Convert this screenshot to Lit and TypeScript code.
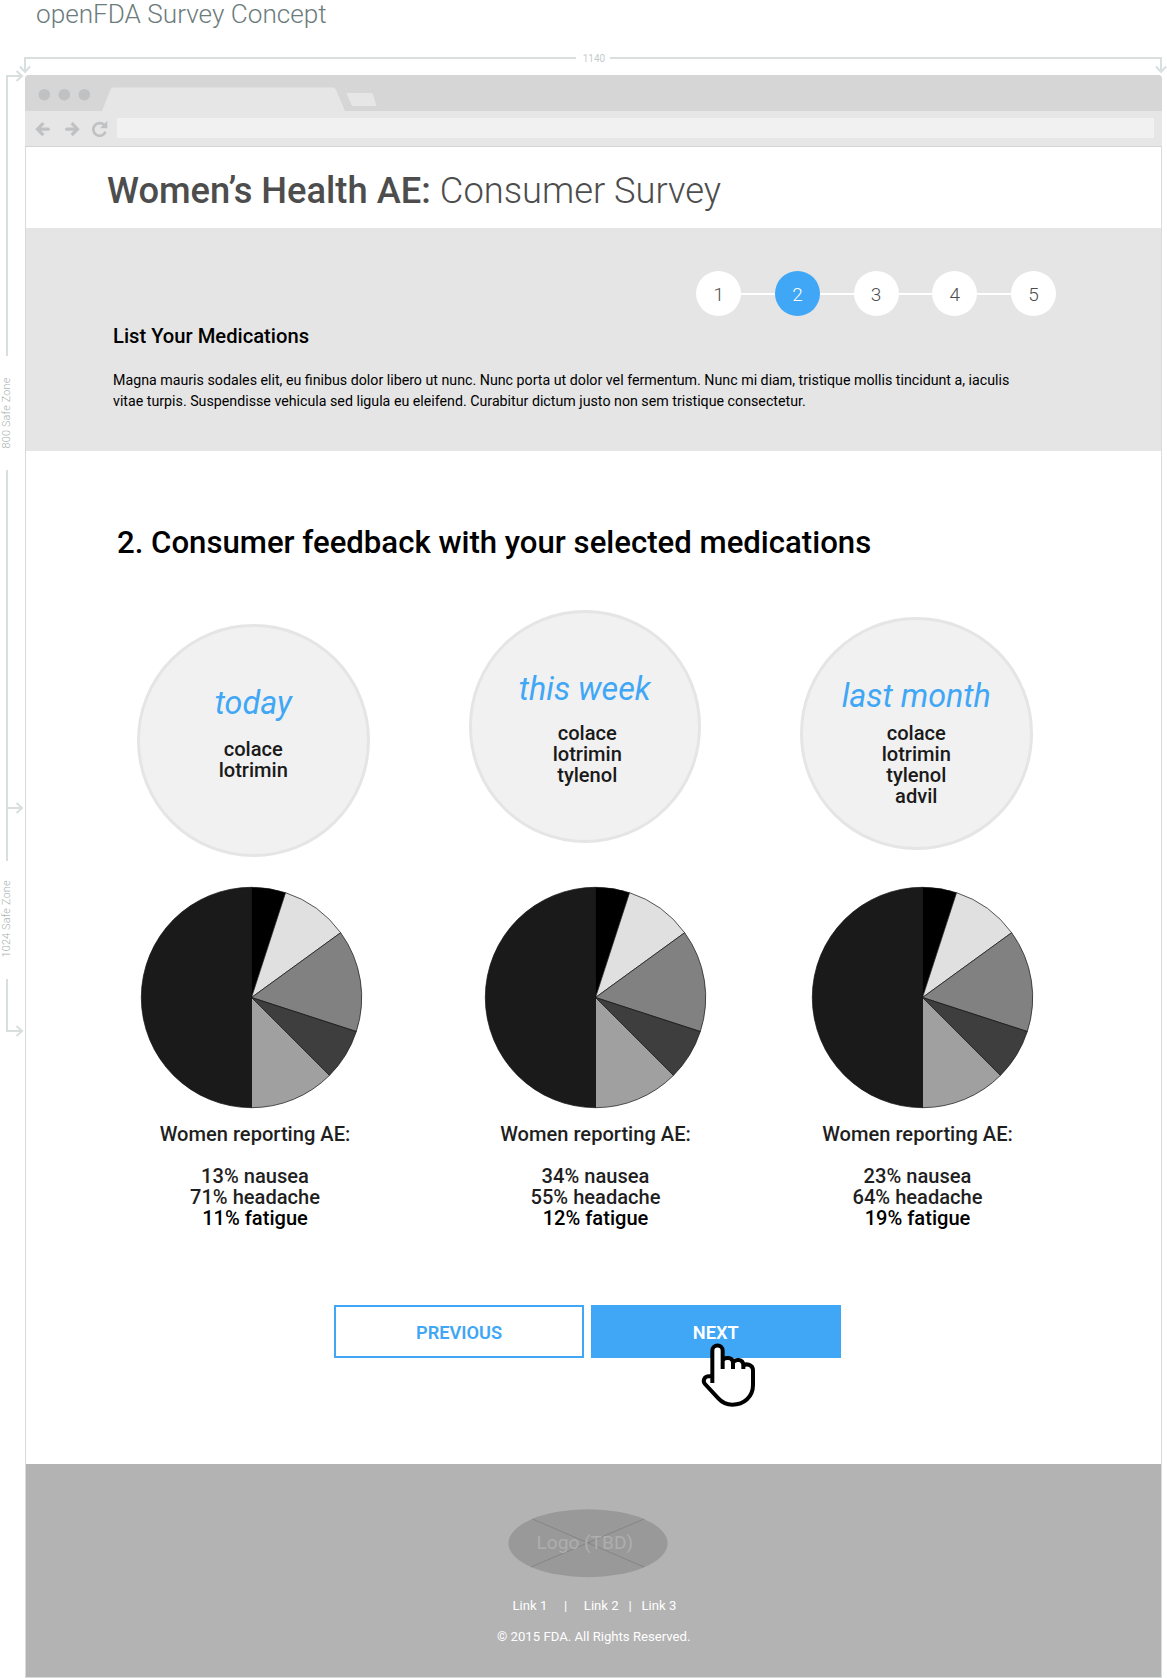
import { LitElement, html, svg, css } from "lit";
import { customElement, property } from "lit/decorators.js";
import { classMap } from "lit/directives/class-map.js";

interface Period {
  title: string;
  kind: string;
  drugs: string[];
  effects: string[];
}

const PERIODS: Period[] = [
  {
    title: "today",
    kind: "today",
    drugs: ["colace", "lotrimin"],
    effects: ["13% nausea", "71% headache", "11% fatigue"],
  },
  {
    title: "this week",
    kind: "week",
    drugs: ["colace", "lotrimin", "tylenol"],
    effects: ["34% nausea", "55% headache", "12% fatigue"],
  },
  {
    title: "last month",
    kind: "month",
    drugs: ["colace", "lotrimin", "tylenol", "advil"],
    effects: ["23% nausea", "64% headache", "19% fatigue"],
  },
];

const SLICES = [
  { share: 5, color: "#000000" },
  { share: 10, color: "#e0e0e0" },
  { share: 15, color: "#818181" },
  { share: 7.5, color: "#3e3e3e" },
  { share: 12.5, color: "#a0a0a0" },
  { share: 50, color: "#1a1a1a" },
];

@customElement("pie-chart")
class PieChart extends LitElement {
  static styles = css`
    :host {
      display: block;
      width: 221px;
      height: 221px;
    }
    .pie {
      display: block;
      width: 221px;
      height: 221px;
      overflow: visible;
    }
    .slice {
      stroke: #111;
      stroke-width: 0.7;
      stroke-linejoin: round;
    }
  `;

  render() {
    const r = 110.2;
    let start = 0;
    const point = (pct: number) => {
      const a = (pct / 100) * Math.PI * 2;
      return `${(r * Math.sin(a)).toFixed(2)} ${(-r * Math.cos(a)).toFixed(2)}`;
    };
    return html`<svg class="pie" viewBox="-110.5 -110.5 221 221">
      ${SLICES.map(({ share, color }) => {
        const from = point(start);
        start += share;
        return svg`<path class="slice" fill=${color} d="M0 0L${from}A${r} ${r} 0 0 1 ${point(start)}Z"></path>`;
      })}
    </svg>`;
  }
}

@customElement("step-tracker")
class StepTracker extends LitElement {
  @property({ type: Number }) current = 1;
  @property({ type: Number }) total = 5;

  static styles = css`
    :host {
      display: flex;
      align-items: center;
    }
    .step {
      width: 45px;
      height: 45px;
      border-radius: 50%;
      background: #fff;
      color: #4d4d4d;
      font-size: 19px;
      font-weight: 300;
      line-height: 48px;
      text-align: center;
    }
    .step.active {
      background: #3fa7f5;
      color: #fff;
    }
    .link {
      width: 33.7px;
      height: 2px;
      background: #fff;
    }
  `;

  render() {
    return Array.from({ length: this.total }, (_, i) => i + 1).map(
      (n) => html`
        ${n > 1 ? html`<div class="link"></div>` : ""}
        <div class=${classMap({ step: true, active: n === this.current })}>${n}</div>
      `,
    );
  }
}

@customElement("browser-chrome")
class BrowserChrome extends LitElement {
  static styles = css`
    :host {
      display: block;
    }
    .strip {
      display: block;
      width: 1137px;
      height: 36px;
    }
    .toolbar {
      display: flex;
      align-items: center;
      box-sizing: border-box;
      height: 36px;
      padding: 0 8px 0 9.500px;
      background: #e6e6e6;
      border-bottom: 1px solid #d4d4d4;
    }
    .nav {
      display: block;
      flex: none;
      width: 82.5px;
      height: 18px;
    }
    .url {
      flex: 1;
      height: 20px;
      margin-bottom: 1px;
      background: #f1f1f1;
      border-radius: 1px;
    }
  `;

  render() {
    return html`
      <svg class="strip" viewBox="25 75 1137 36">
        <path fill="#d6d6d6" d="M25 111V78.500Q25 75 28.500 75H1158.500Q1162 75 1162 78.500V111Z"></path>
        <g fill="#bfc1c2">
          <circle cx="44.300" cy="94.700" r="5.800"></circle>
          <circle cx="64.300" cy="94.700" r="5.800"></circle>
          <circle cx="84.300" cy="94.700" r="5.800"></circle>
        </g>
        <path fill="#e6e6e6" d="M102 111L110.500 89.500Q111.200 87.500 113.500 87.500H332.500Q334.800 87.500 335.800 89.500L345 111Z"></path>
        <path fill="#e6e6e6" d="M346.300 93H371Q372.500 93 373 94.300L376.500 106H353.500Q352 106 351.500 104.800Z"></path>
      </svg>
      <div class="toolbar">
        <svg class="nav" viewBox="105 210.500 247.500 54" fill="none" stroke="#bfc1c2" stroke-width="9.500">
          <path stroke-linecap="round" d="M145 238H116"></path>
          <path d="M130 220L112.500 238L130 256"></path>
          <path stroke-linecap="round" d="M200 238H229"></path>
          <path d="M215 220L232.500 238L215 256"></path>
          <path stroke-width="8" d="M316.500 246A19 19 0 1 1 312 225"></path>
          <path stroke="none" fill="#bfc1c2" d="M322 213V235H300Z"></path>
        </svg>
        <div class="url"></div>
      </div>
    `;
  }
}

@customElement("app-root")
class AppRoot extends LitElement {
  static styles = css`
    :host {
      display: block;
      width: 1167px;
      height: 1678px;
      background: #fff;
      font-family: Roboto, "Liberation Sans", sans-serif;
      color: #000;
    }
    .concept {
      height: 52px;
      padding-left: 36px;
      color: #6c7c7c;
      font-size: 26.15px;
      font-weight: 300;
      line-height: 29px;
      box-sizing: border-box;
    }
    .ruler {
      display: block;
      width: 1167px;
      height: 23px;
    }
    .guide {
      fill: none;
      stroke: #d9dede;
      stroke-width: 2;
    }
    .note {
      fill: #c6cccc;
      font-size: 10px;
    }
    .note.side {
      font-size: 10.8px;
      font-weight: 300;
      fill: #aab2b2;
      letter-spacing: 0.2px;
    }
    .stage {
      display: flex;
    }
    .rail {
      display: block;
      flex: none;
      width: 25px;
      height: 1603px;
      overflow: visible;
    }
    .window {
      width: 1137px;
    }
    .page {
      box-sizing: border-box;
      height: 1531px;
      border: 1px solid #d9dbdb;
      border-top: 0;
    }
    .masthead {
      height: 81px;
      box-sizing: border-box;
      padding: 22px 0 0 81px;
      color: #4d4d4d;
    }
    .name {
      margin: 0;
      font-size: 36.3px;
      font-weight: 500;
      line-height: 44px;
      white-space: nowrap;
    }
    .name .light {
      font-weight: 300;
    }
    .intro {
      box-sizing: border-box;
      height: 223px;
      padding: 43px 105px 0 87px;
      background: #e5e5e5;
    }
    .steps {
      display: flex;
      justify-content: flex-end;
    }
    .subtitle {
      margin: 8px 0 0;
      font-size: 20.2px;
      font-weight: 500;
      line-height: 24px;
    }
    .lead {
      margin: 22px 0 0;
      font-size: 14.23px;
      line-height: 21px;
      white-space: nowrap;
    }
    .main {
      box-sizing: border-box;
      height: 1013px;
      padding-top: 74px;
    }
    .question {
      margin: 0 0 49px 91px;
      font-size: 31.15px;
      font-weight: 500;
      line-height: 36px;
      white-space: nowrap;
    }
    .bubbles {
      display: flex;
      align-items: flex-start;
      gap: 99px;
      height: 247px;
      padding-left: 111px;
    }
    .bubble {
      box-sizing: border-box;
      width: 232.5px;
      height: 232.5px;
      padding-top: 57px;
      border: 3px solid #e5e5e5;
      border-radius: 50%;
      background: #f1f1f1;
      text-align: center;
    }
    .bubble.today {
      margin-top: 14px;
    }
    .bubble.month {
      margin-top: 7px;
    }
    .when {
      color: #3fa7f5;
      font-size: 32.3px;
      font-style: italic;
      line-height: 38px;
    }
    .drugs {
      color: #1a1a1a;
      font-size: 20.1px;
      font-weight: 500;
      line-height: 21px;
    }
    .today .drugs {
      margin-top: 17px;
    }
    .week .drugs {
      margin-top: 15px;
      padding-left: 5px;
    }
    .month .drugs {
      margin-top: 8px;
    }
    .pies {
      display: flex;
      gap: 106.500px;
      padding: 30px 0 0 114.500px;
    }
    .pies .first {
      margin-right: 16.500px;
    }
    .reports {
      display: flex;
      padding: 16px 0 0 128px;
    }
    .report {
      width: 202px;
      color: #1f1f1f;
      font-size: 20.1px;
      font-weight: 500;
      line-height: 21px;
      text-align: center;
    }
    .report + .report {
      margin-left: 138.500px;
    }
    .report + .report + .report {
      margin-left: 120px;
    }
    .effects {
      margin-top: 21px;
    }
    .effects .last {
      color: #000;
    }
    .actions {
      display: flex;
      gap: 6.500px;
      padding: 76px 0 0 308px;
    }
    .button {
      position: relative;
      box-sizing: border-box;
      width: 250.2px;
      height: 52.5px;
      border: 2px solid #3fa7f5;
      color: #3fa7f5;
      font-size: 18.2px;
      font-weight: 600;
      line-height: 51px;
      text-align: center;
    }
    .button.primary {
      background: #3fa7f5;
      color: #fff;
    }
    .pointer {
      position: absolute;
      left: 96.500px;
      top: 23px;
      width: 80px;
      height: 84px;
    }
    .footer {
      box-sizing: border-box;
      display: flex;
      flex-direction: column;
      height: 213px;
      padding-top: 45px;
      background: #b3b3b3;
      color: #fff;
      font-size: 13.15px;
      line-height: 16px;
    }
    .logo {
      display: block;
      width: 160px;
      height: 69px;
      margin-left: 482px;
    }
    .logo-text {
      fill: #aeaeae;
      font-size: 19.1px;
    }
    .links {
      display: flex;
      margin: 20px 0 0 486.500px;
      white-space: nowrap;
    }
    .bar {
      width: 36.500px;
      text-align: center;
    }
    .bar.tight {
      width: 22.800px;
    }
    .copyright {
      margin: 15px 0 0 471px;
    }
  `;

  private arrow(x: number, y: number, down = false) {
    return down
      ? svg`<path class="guide" d="M${x - 5} ${y - 5.5}L${x} ${y}L${x + 5} ${y - 5.5}"></path>`
      : svg`<path class="guide" d="M${x - 5.5} ${y - 5}L${x} ${y}L${x - 5.5} ${y + 5}"></path>`;
  }

  render() {
    return html`
      <div class="concept">openFDA Survey Concept</div>
      <svg class="ruler" viewBox="0 52 1167 23">
        <path class="guide" d="M25 72V58H576M610 58H1161V72"></path>
        ${this.arrow(25, 72, true)} ${this.arrow(1161, 72, true)}
        <text class="note" x="594" y="61.500" text-anchor="middle">1140</text>
      </svg>
      <div class="stage">
        <svg class="rail" viewBox="0 75 25 1603">
          <path
            class="guide"
            d="M22 76H7V356M7 470V861M7 808H22M7 979V1031H22"
          ></path>
          ${this.arrow(22, 76)} ${this.arrow(22, 808)} ${this.arrow(22, 1031)}
          <text class="note side" transform="translate(10 448.500) rotate(-90)">800 Safe Zone</text>
          <text class="note side" transform="translate(10 957.500) rotate(-90)">1024 Safe Zone</text>
        </svg>
        <div class="window">
          <browser-chrome></browser-chrome>
          <div class="page">
            <header class="masthead">
              <h1 class="name">Women’s Health AE: <span class="light">Consumer Survey</span></h1>
            </header>
            <section class="intro">
              <div class="steps"><step-tracker current="2" total="5"></step-tracker></div>
              <h2 class="subtitle">List Your Medications</h2>
              <p class="lead">
                Magna mauris sodales elit, eu finibus dolor libero ut nunc. Nunc porta ut dolor vel
                fermentum. Nunc mi diam, tristique mollis tincidunt a, iaculis<br />vitae turpis.
                Suspendisse vehicula sed ligula eu eleifend. Curabitur dictum justo non sem
                tristique consectetur.
              </p>
            </section>
            <main class="main">
              <h2 class="question">2. Consumer feedback with your selected medications</h2>
              <div class="bubbles">
                ${PERIODS.map(
                  (p) => html`<div class="bubble ${p.kind}">
                    <div class="when">${p.title}</div>
                    <div class="drugs">${p.drugs.map((d) => html`<div>${d}</div>`)}</div>
                  </div>`,
                )}
              </div>
              <div class="pies">
                ${PERIODS.map(
                  (_, i) => html`<pie-chart class=${i === 0 ? "first" : ""}></pie-chart>`,
                )}
              </div>
              <div class="reports">
                ${PERIODS.map(
                  (p) => html`<div class="report">
                    <div>Women reporting AE:</div>
                    <div class="effects">
                      ${p.effects.map(
                        (e, i) => html`<div class=${classMap({ last: i === 2 })}>${e}</div>`,
                      )}
                    </div>
                  </div>`,
                )}
              </div>
              <div class="actions">
                <div class="button">PREVIOUS</div>
                <div class="button primary">
                  NEXT
                  <svg class="pointer" viewBox="0 0 240 252">
                    <path
                      fill="#fff"
                      d="M70 62a15.500 15.500 0 0 1 31 0V92Q118 78 132 92Q150 82 163 100Q192 98 192 120V165C192 200 165 224 130 224C112 224 98 216 88 205L48 162C40 152 46 139 60 139H70Z"
                    ></path>
                    <path
                      fill="none"
                      stroke="#000"
                      stroke-width="12"
                      d="M70 159V62a15.500 15.500 0 0 1 31 0V117M101 92C106 81 132 80 132 99V117M132 99C136 86 163 86 163 106V117M163 109C168 99 192 102 192 122V165C192 200 165 224 130 224C112 224 98 216 88 205L48 162C40 152 46 139 60 139H70"
                    ></path>
                  </svg>
                </div>
              </div>
            </main>
            <footer class="footer">
              <svg class="logo" viewBox="508 1509 160 69">
                <ellipse cx="588" cy="1543.200" rx="79.600" ry="34" fill="#999"></ellipse>
                <path stroke="#858585" d="M532.500 1519L644 1567M644 1519L531 1567"></path>
                <text class="logo-text" x="584.800" y="1548.700" text-anchor="middle">Logo (TBD)</text>
              </svg>
              <div class="links">
                <span>Link 1</span><span class="bar">|</span><span>Link 2</span
                ><span class="bar tight">|</span><span>Link 3</span>
              </div>
              <div class="copyright">© 2015 FDA. All Rights Reserved.</div>
            </footer>
          </div>
        </div>
      </div>
    `;
  }
}
